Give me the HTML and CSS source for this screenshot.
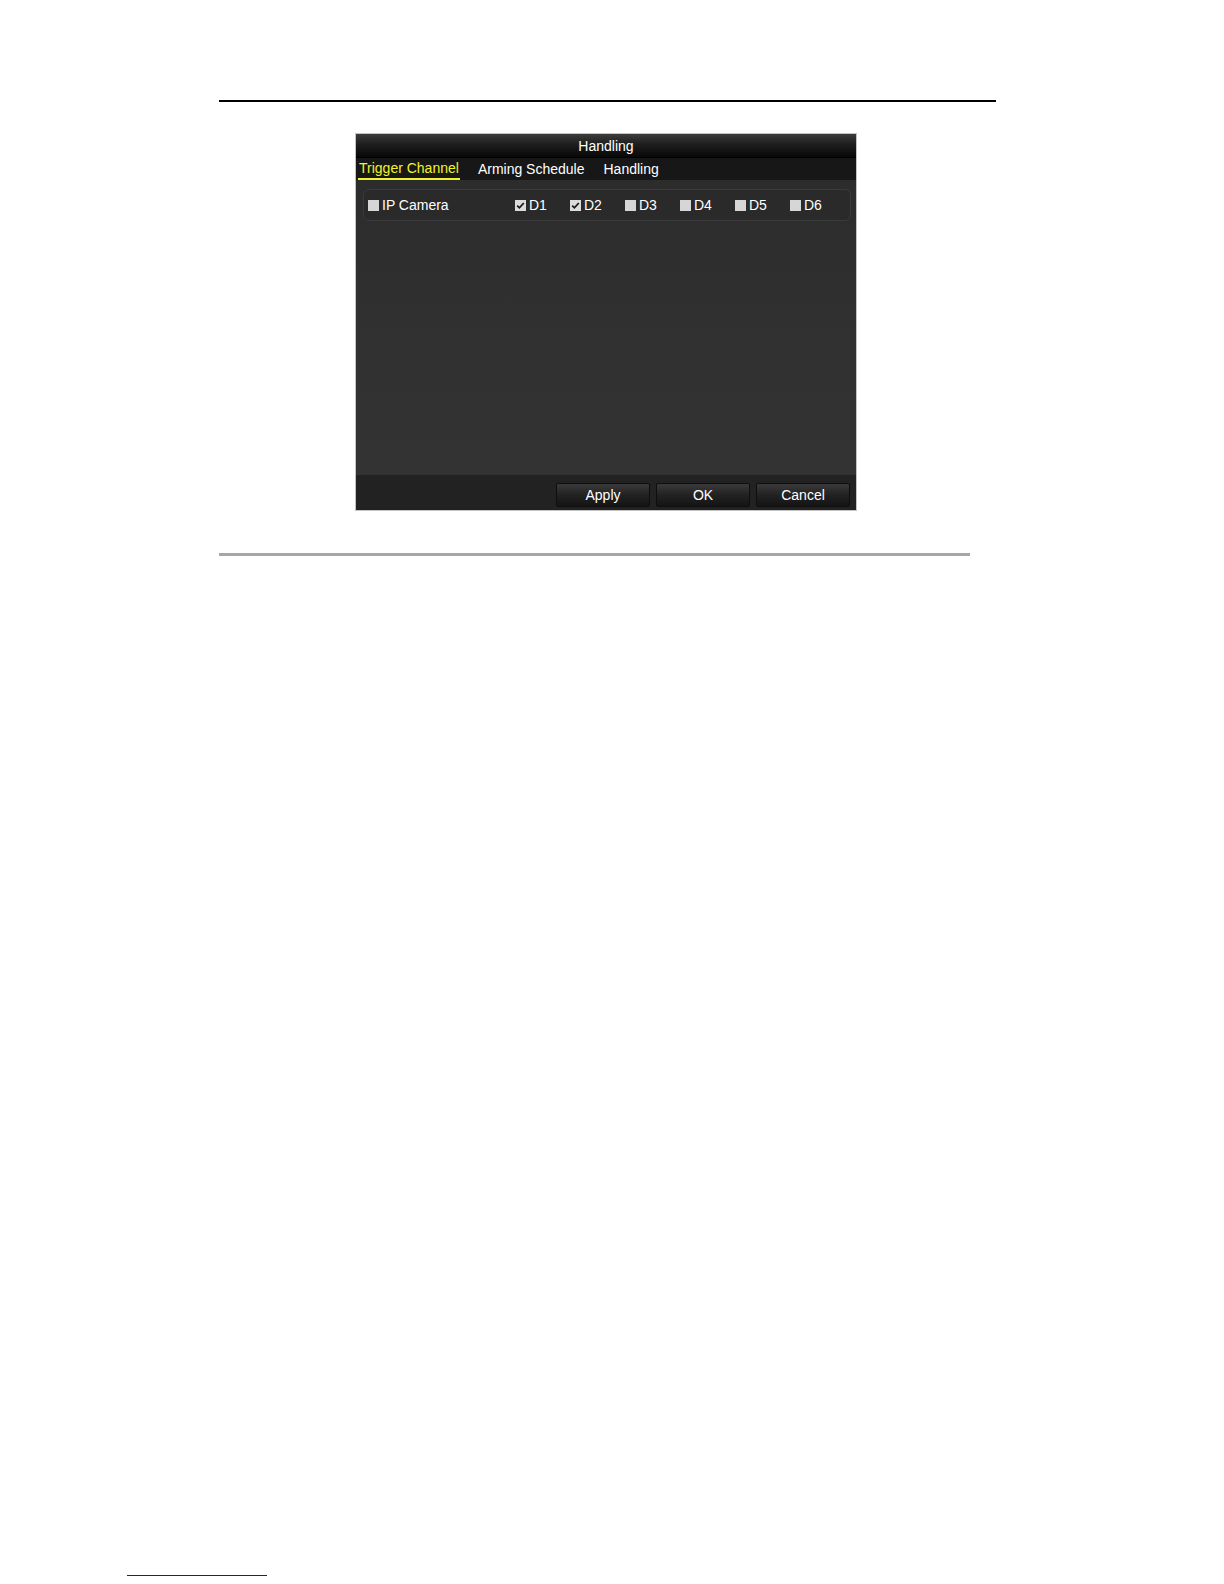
FILE: index.html
```html
<!DOCTYPE html>
<html>
<head>
<meta charset="utf-8">
<link rel="stylesheet" href="styles.css">
</head>
<body>
<div class="page">
  <div class="top-rule"></div>
  <div class="dialog">
    <div class="title-bar">Handling</div>
    <div class="tab-bar">
      <span class="tab active">Trigger Channel</span>
      <span class="tab">Arming Schedule</span>
      <span class="tab">Handling</span>
    </div>
    <div class="content">
      <div class="row-panel">
        <label class="item first"><span class="box"></span>IP Camera</label>
        <label class="item"><span class="box checked"><svg viewBox="0 0 11 11" width="11" height="11"><path d="M2.2 5.6 L4.4 7.8 L8.8 3.0" fill="none" stroke="#1a1a1a" stroke-width="1.8"/></svg></span>D1</label>
        <label class="item"><span class="box checked"><svg viewBox="0 0 11 11" width="11" height="11"><path d="M2.2 5.6 L4.4 7.8 L8.8 3.0" fill="none" stroke="#1a1a1a" stroke-width="1.8"/></svg></span>D2</label>
        <label class="item"><span class="box"></span>D3</label>
        <label class="item"><span class="box"></span>D4</label>
        <label class="item"><span class="box"></span>D5</label>
        <label class="item"><span class="box"></span>D6</label>
      </div>
    </div>
    <div class="footer">
      <button class="btn">Apply</button>
      <button class="btn">OK</button>
      <button class="btn">Cancel</button>
    </div>
  </div>
  <div class="gray-rule"></div>
  <div class="link-rule"></div>
</div>
</body>
</html>
```
FILE: styles.css
```css
html, body {
  margin: 0;
  padding: 0;
  background: #ffffff;
}
.page {
  display: flex;
  flex-direction: column;
  align-items: flex-start;
  padding-top: 100px;
  font-family: "Liberation Sans", Arial, sans-serif;
}
.top-rule {
  margin-left: 219px;
  width: 777px;
  height: 2px;
  background: #000000;
}
.dialog {
  margin-left: 355px;
  margin-top: 31px;
  width: 502px;
  height: 378px;
  box-sizing: border-box;
  border: 1px solid #c4c4c4;
  background: #303030;
  display: flex;
  flex-direction: column;
  color: #ffffff;
  font-size: 14px;
}
.title-bar {
  height: 23px;
  line-height: 24px;
  text-align: center;
  background: linear-gradient(#3c3c3c 0%, #1e1e1e 45%, #080808 100%);
  border-bottom: 1px solid #000;
}
.tab-bar {
  height: 22px;
  background: #171717;
  display: flex;
  align-items: stretch;
  padding-left: 2px;
  gap: 17px;
}
.tab {
  line-height: 22px;
  padding: 0 1px;
  box-sizing: border-box;
}
.tab.active {
  color: #f2f22a;
  border-bottom: 2px solid #f2f22a;
  height: 22px;
  line-height: 21px;
}
.content {
  flex: 1;
  background: linear-gradient(#2c2c2c, #313131 60%, #333333);
  padding: 9px 5px 0 7px;
}
.row-panel {
  height: 32px;
  box-sizing: border-box;
  border: 1px solid #3a3a3a;
  border-radius: 6px;
  background: #2a2a2a;
  display: flex;
  align-items: center;
  padding-left: 4px;
}
.item {
  display: flex;
  align-items: center;
  width: 55px;
  color: #ffffff;
}
.item.first {
  width: 147px;
}
.box {
  width: 11px;
  height: 11px;
  background: #d6d6d6;
  margin-right: 3px;
  display: inline-flex;
}
.box.checked {
  background: #dcdcdc;
}
.footer {
  height: 35px;
  background: #222222;
  display: flex;
  justify-content: flex-end;
  align-items: flex-start;
  padding: 8px 6px 0 0;
  box-sizing: border-box;
  gap: 6px;
}
.btn {
  width: 94px;
  height: 24px;
  box-sizing: border-box;
  border: 1px solid #0e0e0e;
  border-radius: 2px;
  background: linear-gradient(#3a3a3a, #222222 50%, #141414);
  color: #ffffff;
  font-family: "Liberation Sans", Arial, sans-serif;
  font-size: 14px;
  padding: 0;
}
.gray-rule {
  margin-left: 219px;
  margin-top: 42px;
  width: 751px;
  height: 3px;
  background: #a6a6a6;
}
.link-rule {
  margin-left: 127px;
  margin-top: 1019px;
  width: 140px;
  height: 1px;
  background: #1a1a8c;
}
```
